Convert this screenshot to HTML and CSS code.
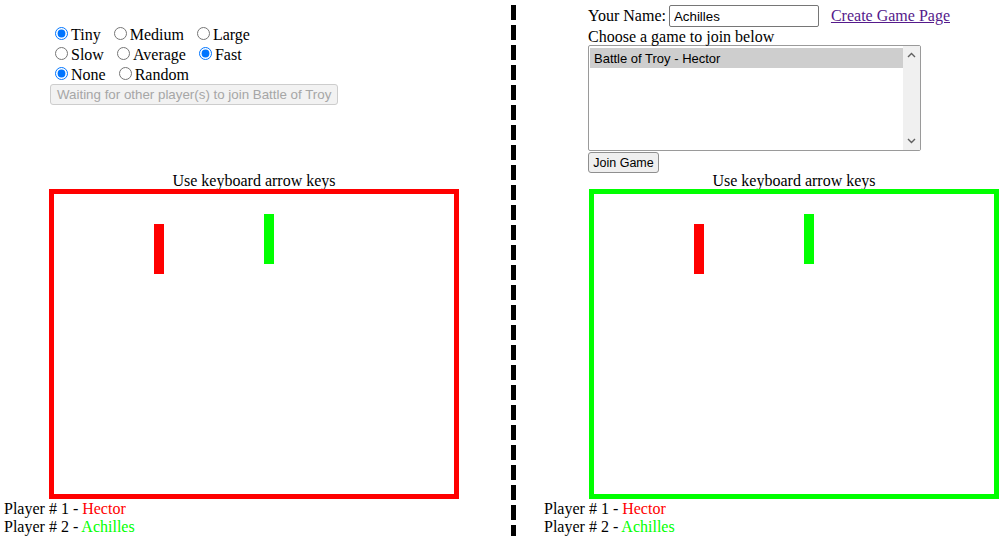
FILE: index.html
```html
<!DOCTYPE html>
<html>
<head>
<meta charset="utf-8">
<title>Pong</title>
<link rel="stylesheet" href="styles.css">
</head>
<body>
<div class="page">
  <section class="panel panel-left">
    <div class="header header-left">
      <div class="row"><input type="radio" name="size" checked>Tiny&nbsp; <input type="radio" name="size">Medium&nbsp; <input type="radio" name="size">Large</div>
      <div class="row"><input type="radio" name="speed">Slow&nbsp; <input type="radio" name="speed">Average&nbsp; <input type="radio" name="speed" checked>Fast</div>
      <div class="row"><input type="radio" name="mode" checked>None&nbsp; <input type="radio" name="mode">Random</div>
      <button class="btn btn-wait" disabled>Waiting for other player(s) to join Battle of Troy</button>
    </div>
    <div class="caption">Use keyboard arrow keys</div>
    <div class="court court-red">
      <div class="paddle paddle-red"></div>
      <div class="paddle paddle-green"></div>
    </div>
    <div class="players">
      <div>Player # 1 - <span class="red-name">Hector</span></div>
      <div>Player # 2 - <span class="green-name">Achilles</span></div>
    </div>
  </section>

  <div class="divider"></div>

  <section class="panel panel-right">
    <div class="header header-right">
      <div class="name-row">
        <span>Your Name:</span>
        <input class="name-input" type="text" value="Achilles">
        <a class="create-link" href="#">Create Game Page</a>
      </div>
      <div class="choose">Choose a game to join below</div>
      <div class="listbox">
        <div class="options">
          <div class="option option-selected">Battle of Troy - Hector</div>
        </div>
        <div class="scrollbar">
          <svg class="chev" width="17" height="17" viewBox="0 0 17 17"><polyline points="5,11 8.5,7.5 12,11" fill="none" stroke="#606060" stroke-width="1.4"/></svg>
          <svg class="chev" width="17" height="17" viewBox="0 0 17 17"><polyline points="5,6 8.5,9.5 12,6" fill="none" stroke="#606060" stroke-width="1.4"/></svg>
        </div>
      </div>
      <button class="btn btn-join">Join Game</button>
    </div>
    <div class="caption">Use keyboard arrow keys</div>
    <div class="court court-green">
      <div class="paddle paddle-red"></div>
      <div class="paddle paddle-green"></div>
    </div>
    <div class="players">
      <div>Player # 1 - <span class="red-name">Hector</span></div>
      <div>Player # 2 - <span class="green-name">Achilles</span></div>
    </div>
  </section>
</div>
</body>
</html>
```

FILE: styles.css
```css
html, body {
  margin: 0;
  padding: 0;
  background: #fff;
}

body {
  font-family: "Liberation Serif", "Times New Roman", serif;
  font-size: 16px;
  color: #000;
}

.page {
  display: flex;
  height: 536px;
  overflow: hidden;
}

.panel {
  display: flex;
  flex-direction: column;
  flex: none;
}

.panel-left {
  width: 511px;
}

.panel-right {
  width: 460px;
}

.divider {
  flex: none;
  width: 5px;
  height: 536px;
  margin-right: 24px;
  background: repeating-linear-gradient(to bottom, transparent 0 5px, #000 5px 20px);
}

.header {
  flex: none;
  height: 171px;
  box-sizing: border-box;
}

.header-left {
  padding: 24px 0 0 50px;
}

.header-right {
  padding: 5px 0 0 48px;
}

.row {
  height: 20px;
  white-space: nowrap;
}

.btn {
  display: block;
  box-sizing: border-box;
  height: 21px;
  margin: 0;
  border: 1px solid;
  border-radius: 3px;
  font-family: "Liberation Sans", Arial, sans-serif;
  white-space: nowrap;
}

.btn-wait {
  padding: 0 6px;
  font-size: 13.333px;
  background: #f2f2f2;
  border-color: #cdcdcd;
  color: #a6a6a6;
}

.btn-join {
  width: 71px;
  margin-top: 1px;
  padding: 0;
  text-align: center;
  font-size: 12.5px;
  background: #efefef;
  border-color: #8f8f8f;
  color: #000;
}

.name-row {
  display: flex;
  align-items: baseline;
  height: 22px;
  white-space: nowrap;
}

.name-input {
  box-sizing: border-box;
  width: 150px;
  height: 22px;
  margin: 0 0 0 3px;
  padding: 1px 4px;
  border: 1px solid #767676;
  border-radius: 2px;
  font-family: "Liberation Sans", Arial, sans-serif;
  font-size: 13.333px;
  color: #000;
}

.create-link {
  margin-left: 12px;
  color: #551a8b;
  text-decoration: underline;
}

.choose {
  height: 18px;
  line-height: 20px;
  white-space: nowrap;
}

.listbox {
  display: flex;
  box-sizing: border-box;
  width: 333px;
  height: 106px;
  border: 1px solid #9a9a9a;
  border-radius: 2px;
  background: #fff;
}

.options {
  flex: 1;
  padding: 2px 0 0 1px;
}

.option {
  height: 20px;
  line-height: 21px;
  padding-left: 4px;
  font-family: "Liberation Sans", Arial, sans-serif;
  font-size: 13px;
  white-space: nowrap;
}

.option-selected {
  background: #cecece;
}

.scrollbar {
  flex: none;
  width: 17px;
  background: #f0f0f0;
  display: flex;
  flex-direction: column;
  justify-content: space-between;
}

.chev {
  display: block;
}

.caption {
  flex: none;
  width: 410px;
  height: 18px;
  margin-left: 49px;
  line-height: 20px;
  text-align: center;
  white-space: nowrap;
}

.court {
  position: relative;
  flex: none;
  box-sizing: border-box;
  width: 410px;
  height: 310px;
  margin-left: 49px;
  border: 5px solid;
  background: #fff;
}

.court-red {
  border-color: #ff0000;
}

.court-green {
  border-color: #00ff00;
}

.paddle {
  position: absolute;
  width: 10px;
  height: 50px;
}

.paddle-red {
  left: 100px;
  top: 30px;
  background: #ff0000;
}

.paddle-green {
  left: 210px;
  top: 20px;
  background: #00ff00;
}

.players {
  padding: 1px 0 0 4px;
  line-height: 18px;
  white-space: nowrap;
}

.red-name {
  color: #ff0000;
}

.green-name {
  color: #00ff00;
}
```
